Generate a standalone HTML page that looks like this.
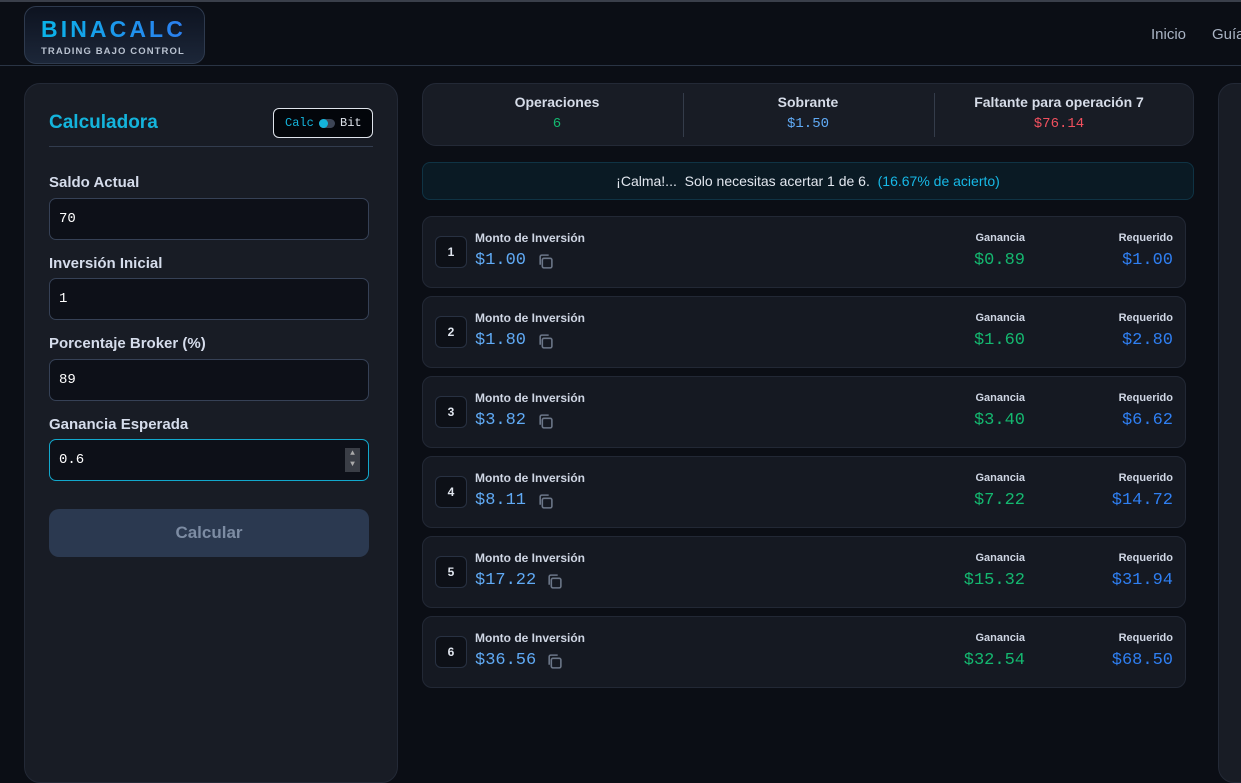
<!DOCTYPE html>
<html><head><meta charset="utf-8"><style>
*{box-sizing:border-box;margin:0;padding:0}
body{width:1241px;height:754px;overflow:hidden;background:#0b0e15;font-family:"Liberation Sans",sans-serif;position:relative;color:#d6dce8}
.mono{font-family:"Liberation Mono",monospace}
.top{position:absolute;left:0;top:0;width:1241px;height:2px;background:#3a3f4a}
.hdr{position:absolute;left:0;top:2px;width:1241px;height:64px;border-bottom:1px solid #2a3444}
.logo{position:absolute;left:24px;top:4px;width:181px;height:58px;border:1px solid #2e3a4e;border-radius:12px;background:linear-gradient(#0d1320,#1c2638)}
.logo b{position:absolute;left:16px;top:9px;font-size:23px;letter-spacing:3.1px;font-weight:900;background:linear-gradient(90deg,#0ab4e8,#2c7ef0);-webkit-background-clip:text;color:transparent}
.logo span{position:absolute;left:16px;top:39px;font-size:9.5px;font-weight:bold;letter-spacing:1.1px;color:#b9c2d0}
.nav{position:absolute;top:24px;font-size:15px;color:#aab4c4}
.panel{position:absolute;background:#181c25;border:1px solid #232936;border-radius:16px}
.title{position:absolute;left:24px;top:28px;font-size:19px;font-weight:bold;color:#14b4dc}
.tog{position:absolute;left:248px;top:24px;width:100px;height:30px;border:1.5px solid #dfe4ec;border-radius:6px;background:#03060b;font-family:"Liberation Mono",monospace;font-size:12px}
.lbl{position:absolute;left:24px;font-size:15px;font-weight:bold;color:#d5dceb}
.inp{position:absolute;left:24px;width:320px;height:42px;background:#0d1018;border:1px solid #364156;border-radius:7px;font-family:"Liberation Mono",monospace;font-size:14px;color:#fff;padding:12px 9px}
.btn{position:absolute;left:24px;top:425px;width:320px;height:48px;background:#2b3950;border-radius:10px;color:#7d8ca3;font-size:17px;font-weight:bold;text-align:center;line-height:48px}
.stat{position:absolute;top:10px;text-align:center;width:250px}
.stat b{display:block;font-size:14px;color:#d6dce8}
.stat span{display:block;margin-top:6px;font-size:14px}
.row{position:absolute;left:422px;width:764px;height:72px;background:#151922;border:1px solid #222835;border-radius:10px}
.num{position:absolute;left:12px;top:19px;width:32px;height:32px;border:1px solid #283142;border-radius:6px;background:#0d1017;text-align:center;line-height:30px;font-size:12px;font-weight:bold;color:#e0e5ee}
.ml{position:absolute;left:52px;top:14px;font-size:12px;font-weight:bold;color:#cfd6e4}
.mv{position:absolute;left:52px;top:34px;font-size:17px;color:#60aaf5;font-family:"Liberation Mono",monospace}
.cp{position:absolute;top:36px;width:17px;height:17px}
.gl,.rl{position:absolute;top:15px;font-size:11px;font-weight:bold;color:#cfd6e4;text-align:right}
.gv,.rv{position:absolute;top:34px;font-size:17px;font-family:"Liberation Mono",monospace;text-align:right}
.gl,.gv{right:160px}.rl,.rv{right:12px}
.gv{color:#14b870}.rv{color:#2f7ff2}
</style></head><body>
<div class="top"></div>
<div class="hdr">
<div class="logo"><b>BINACALC</b><span>TRADING BAJO CONTROL</span></div>
<div class="nav" style="left:1151px">Inicio</div>
<div class="nav" style="left:1212px">Guía</div>
</div>

<div class="panel" style="left:24px;top:83px;width:374px;height:700px">
<div class="title">Calculadora</div>
<div class="tog"><span style="position:absolute;left:11px;top:7px;color:#14b4dc">Calc</span>
<span style="position:absolute;left:45px;top:10px;width:16px;height:9px;border-radius:5px;background:#3c4556"></span>
<span style="position:absolute;left:45px;top:10px;width:9px;height:9px;border-radius:5px;background:#14b4dc"></span>
<span style="position:absolute;left:66px;top:7px;color:#dde2ea">Bit</span></div>
<div style="position:absolute;left:24px;top:62px;width:324px;height:1px;background:#323c4e"></div>
<div class="lbl" style="top:90px">Saldo Actual</div>
<div class="inp" style="top:114px">70</div>
<div class="lbl" style="top:171px">Inversión Inicial</div>
<div class="inp" style="top:194px">1</div>
<div class="lbl" style="top:251px">Porcentaje Broker (%)</div>
<div class="inp" style="top:275px">89</div>
<div class="lbl" style="top:332px">Ganancia Esperada</div>
<div class="inp" style="top:355px;border-color:#12a8cc">0.6<span style="position:absolute;right:8px;top:8px;width:15px;height:24px;background:#3a3e46;color:#aaa;font-size:8px;line-height:11px;text-align:center">▲<br>▼</span></div>
<div class="btn">Calcular</div>
</div>

<div class="panel" style="left:422px;top:83px;width:772px;height:63px;border-radius:14px">
<div class="stat" style="left:9px"><b>Operaciones</b><span class="mono" style="color:#14b870">6</span></div>
<div style="position:absolute;left:260px;top:9px;width:1px;height:44px;background:#343c4a"></div>
<div class="stat" style="left:260px"><b>Sobrante</b><span class="mono" style="color:#60aaf5">$1.50</span></div>
<div style="position:absolute;left:511px;top:9px;width:1px;height:44px;background:#343c4a"></div>
<div class="stat" style="left:511px"><b>Faltante para operación 7</b><span class="mono" style="color:#f0505e">$76.14</span></div>
</div>

<div style="position:absolute;left:422px;top:162px;width:772px;height:38px;background:#0a1a24;border:1px solid #0f3344;border-radius:8px;text-align:center;line-height:36px;font-size:14px;color:#e2e7ef">¡Calma!... &nbsp;Solo necesitas acertar 1 de 6. &nbsp;<span style="color:#17b8e6">(16.67% de acierto)</span></div>

<div class="row" style="top:216px"><div class="num">1</div><div class="ml">Monto de Inversión</div><div class="mv">$1.00</div><svg class="cp" style="left:114px" viewBox="0 0 16 16" fill="none" stroke="#6b7688" stroke-width="1.5"><rect x="5" y="5" width="9" height="9" rx="1.5"/><path d="M3 11V3.5A1.5 1.5 0 0 1 4.5 2H11"/></svg><div class="gl">Ganancia</div><div class="gv">$0.89</div><div class="rl">Requerido</div><div class="rv">$1.00</div></div>
<div class="row" style="top:296px"><div class="num">2</div><div class="ml">Monto de Inversión</div><div class="mv">$1.80</div><svg class="cp" style="left:114px" viewBox="0 0 16 16" fill="none" stroke="#6b7688" stroke-width="1.5"><rect x="5" y="5" width="9" height="9" rx="1.5"/><path d="M3 11V3.5A1.5 1.5 0 0 1 4.5 2H11"/></svg><div class="gl">Ganancia</div><div class="gv">$1.60</div><div class="rl">Requerido</div><div class="rv">$2.80</div></div>
<div class="row" style="top:376px"><div class="num">3</div><div class="ml">Monto de Inversión</div><div class="mv">$3.82</div><svg class="cp" style="left:114px" viewBox="0 0 16 16" fill="none" stroke="#6b7688" stroke-width="1.5"><rect x="5" y="5" width="9" height="9" rx="1.5"/><path d="M3 11V3.5A1.5 1.5 0 0 1 4.5 2H11"/></svg><div class="gl">Ganancia</div><div class="gv">$3.40</div><div class="rl">Requerido</div><div class="rv">$6.62</div></div>
<div class="row" style="top:456px"><div class="num">4</div><div class="ml">Monto de Inversión</div><div class="mv">$8.11</div><svg class="cp" style="left:114px" viewBox="0 0 16 16" fill="none" stroke="#6b7688" stroke-width="1.5"><rect x="5" y="5" width="9" height="9" rx="1.5"/><path d="M3 11V3.5A1.5 1.5 0 0 1 4.5 2H11"/></svg><div class="gl">Ganancia</div><div class="gv">$7.22</div><div class="rl">Requerido</div><div class="rv">$14.72</div></div>
<div class="row" style="top:536px"><div class="num">5</div><div class="ml">Monto de Inversión</div><div class="mv">$17.22</div><svg class="cp" style="left:123px" viewBox="0 0 16 16" fill="none" stroke="#6b7688" stroke-width="1.5"><rect x="5" y="5" width="9" height="9" rx="1.5"/><path d="M3 11V3.5A1.5 1.5 0 0 1 4.5 2H11"/></svg><div class="gl">Ganancia</div><div class="gv">$15.32</div><div class="rl">Requerido</div><div class="rv">$31.94</div></div>
<div class="row" style="top:616px"><div class="num">6</div><div class="ml">Monto de Inversión</div><div class="mv">$36.56</div><svg class="cp" style="left:123px" viewBox="0 0 16 16" fill="none" stroke="#6b7688" stroke-width="1.5"><rect x="5" y="5" width="9" height="9" rx="1.5"/><path d="M3 11V3.5A1.5 1.5 0 0 1 4.5 2H11"/></svg><div class="gl">Ganancia</div><div class="gv">$32.54</div><div class="rl">Requerido</div><div class="rv">$68.50</div></div>

<div class="panel" style="left:1218px;top:83px;width:100px;height:700px"></div>
</body></html>
